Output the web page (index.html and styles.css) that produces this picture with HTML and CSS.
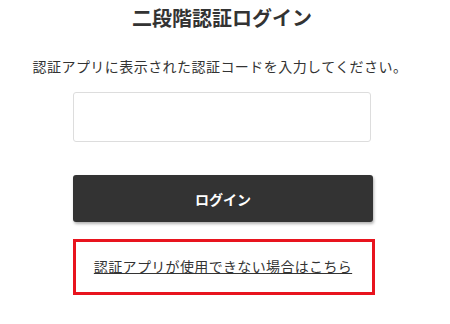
FILE: index.html
```html
<!DOCTYPE html>
<html lang="ja">
<head>
    <meta charset="UTF-8">
    <meta name="viewport" content="width=device-width, initial-scale=1.0">
    <title>二段階認証ログイン</title>
    <link rel="stylesheet" href="styles.css">
</head>

<body>
    <main class="login">
        <h1 class="login-title">二段階認証ログイン</h1>
        <p class="login-lead">認証アプリに表示された認証コードを入力してください。</p>

        <form class="login-form" onsubmit="return false;">
            <input type="text" class="code-input" inputmode="numeric" autocomplete="one-time-code">
            <button type="submit" class="login-button">ログイン</button>
        </form>

        <!-- fallback link -->
        <div class="help-box">
            <a href="#" class="help-link">認証アプリが使用できない場合はこちら</a>
        </div>
    </main>
</body>
</html>
```

FILE: styles.css
```css
body {
    margin: 0;
    font-family: "Noto Sans CJK JP", "Noto Sans", sans-serif;
    color: #333;
    background-color: #fff;
}

.login {
    width: 446px;
    display: flex;
    flex-direction: column;
    align-items: center;
}

.login-title {
    margin: 0 0 0 -2px;
    font-size: 20px;
    line-height: 36px;
    font-weight: bold;
    color: #333;
}

.login-lead {
    margin: 18px 0 0 -6px;
    font-size: 14px;
    letter-spacing: 0.45px;
    line-height: 24px;
}

.login-form {
    display: flex;
    flex-direction: column;
    align-items: center;
    margin-top: 14px;
}

.code-input {
    width: 298px;
    height: 50px;
    margin-left: -2px;
    box-sizing: border-box;
    border: 1px solid #ddd;
    border-radius: 3px;
    outline: none;
    padding: 0 12px;
    font-size: 16px;
}

.login-button {
    width: 300px;
    height: 47px;
    margin-top: 33px;
    border: none;
    border-radius: 3px;
    background-color: #333;
    color: #fff;
    font-family: inherit;
    font-size: 14px;
    font-weight: bold;
    box-shadow: 1px 2px 3px rgba(0, 0, 0, 0.3);
    cursor: pointer;
}

.help-box {
    width: 302px;
    height: 56px;
    box-sizing: border-box;
    margin-top: 17px;
    margin-left: 2px;
    border: 3px solid #e8141e;
    display: flex;
    align-items: center;
    justify-content: center;
}

.help-link {
    font-size: 14px;
    letter-spacing: 0.35px;
    line-height: 24px;
    margin-top: -3px;
    margin-left: -2px;
    color: #333;
    text-decoration: underline;
}
```
